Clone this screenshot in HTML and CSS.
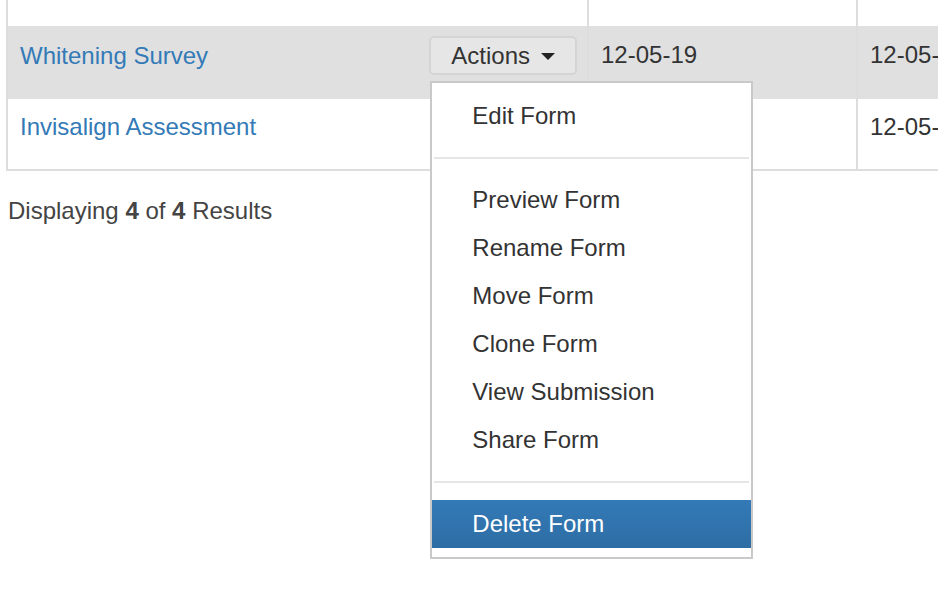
FILE: index.html
```html
<!DOCTYPE html>
<html lang="en">
<head>
    <meta charset="UTF-8">
    <meta name="viewport" content="width=device-width, initial-scale=1.0">
    <title>Forms</title>
    <link rel="stylesheet" href="styles.css">
</head>
<body>
    <div class="page">
        <table class="forms">
            <colgroup>
                <col class="col-name">
                <col class="col-date">
                <col class="col-date">
            </colgroup>
            <!-- bottom of the previous row, scrolled out of view -->
            <tr class="prev">
                <td></td>
                <td></td>
                <td></td>
            </tr>
            <tr class="active">
                <td>
                    <div class="name-cell">
                        <a href="#" class="form-link">Whitening Survey</a>
                        <div class="actions">
                            <button type="button" class="btn">Actions<span class="caret"></span></button>
                            <ul class="dropdown">
                                <li><a href="#">Edit Form</a></li>
                                <li class="divider"></li>
                                <li><a href="#">Preview Form</a></li>
                                <li><a href="#">Rename Form</a></li>
                                <li><a href="#">Move Form</a></li>
                                <li><a href="#">Clone Form</a></li>
                                <li><a href="#">View Submission</a></li>
                                <li><a href="#">Share Form</a></li>
                                <li class="divider"></li>
                                <li class="selected"><a href="#">Delete Form</a></li>
                            </ul>
                        </div>
                    </div>
                </td>
                <td class="date">12-05-19</td>
                <td class="date">12-05-19</td>
            </tr>
            <tr class="last">
                <td><a href="#" class="form-link">Invisalign Assessment</a></td>
                <td class="date">12-05-19</td>
                <td class="date">12-05-19</td>
            </tr>
        </table>

        <p class="results">Displaying <b>4</b> of <b>4</b> Results</p>
    </div>
</body>
</html>
```

FILE: styles.css
```css
html {
    overflow: hidden;
}

body {
    margin: 0;
    min-height: 100vh;
    font-family: "Liberation Sans", Arial, sans-serif;
    font-size: 24px;
    line-height: 24px;
    color: #333;
    background: white;
}

.page {
    padding-left: 6px;
}

.forms {
    border-collapse: collapse;
    table-layout: fixed;
    width: 1119px;
}

.col-name {
    width: 581px;
}

.col-date {
    width: 269px;
}

.forms td {
    border-left: 2px solid #dddddd;
    border-right: 2px solid #dddddd;
    padding: 0 10px 0 12px;
    vertical-align: top;
}

.forms .prev td {
    height: 26px;
}

.forms .active td {
    height: 73px;
    background-color: #e0e0e0;
}

.forms .last td {
    height: 71px;
    border-bottom: 2px solid #dddddd;
    padding-top: 16px;
    box-sizing: border-box;
}

.forms .active td.date {
    padding-top: 17px;
    box-sizing: border-box;
}

.name-cell {
    display: flex;
    justify-content: space-between;
    align-items: center;
    padding-top: 10px;
}

.form-link {
    color: #337ab7;
    text-decoration: none;
}

.actions {
    position: relative;
}

.btn {
    display: flex;
    align-items: center;
    height: 39px;
    padding: 0 20px 0 20px;
    border: 2px solid #d4d4d4;
    border-radius: 5px;
    background-color: #e6e6e6;
    font-family: inherit;
    font-size: 24px;
    color: #333;
}

.caret {
    display: inline-block;
    margin-left: 11px;
    margin-top: 2px;
    border-top: 7px solid #222;
    border-left: 7px solid transparent;
    border-right: 7px solid transparent;
}

.dropdown {
    position: absolute;
    top: 45px;
    left: 1px;
    width: 319px;
    margin: 0;
    padding: 9px 0 9px;
    list-style: none;
    background: white;
    border: 2px solid #c9c9c9;
    z-index: 10;
}

.dropdown li a {
    display: block;
    height: 48px;
    line-height: 48px;
    padding-left: 40px;
    color: #333;
    text-decoration: none;
    white-space: nowrap;
}

.dropdown .divider {
    height: 2px;
    margin: 17px 2px;
    background-color: #e5e5e5;
}

.dropdown .selected a {
    color: white;
    background-image: linear-gradient(to bottom, #337ab7 0, #2e6da4 100%);
}

.results {
    margin: 28px 0 0 2px;
    color: #444;
}
```
